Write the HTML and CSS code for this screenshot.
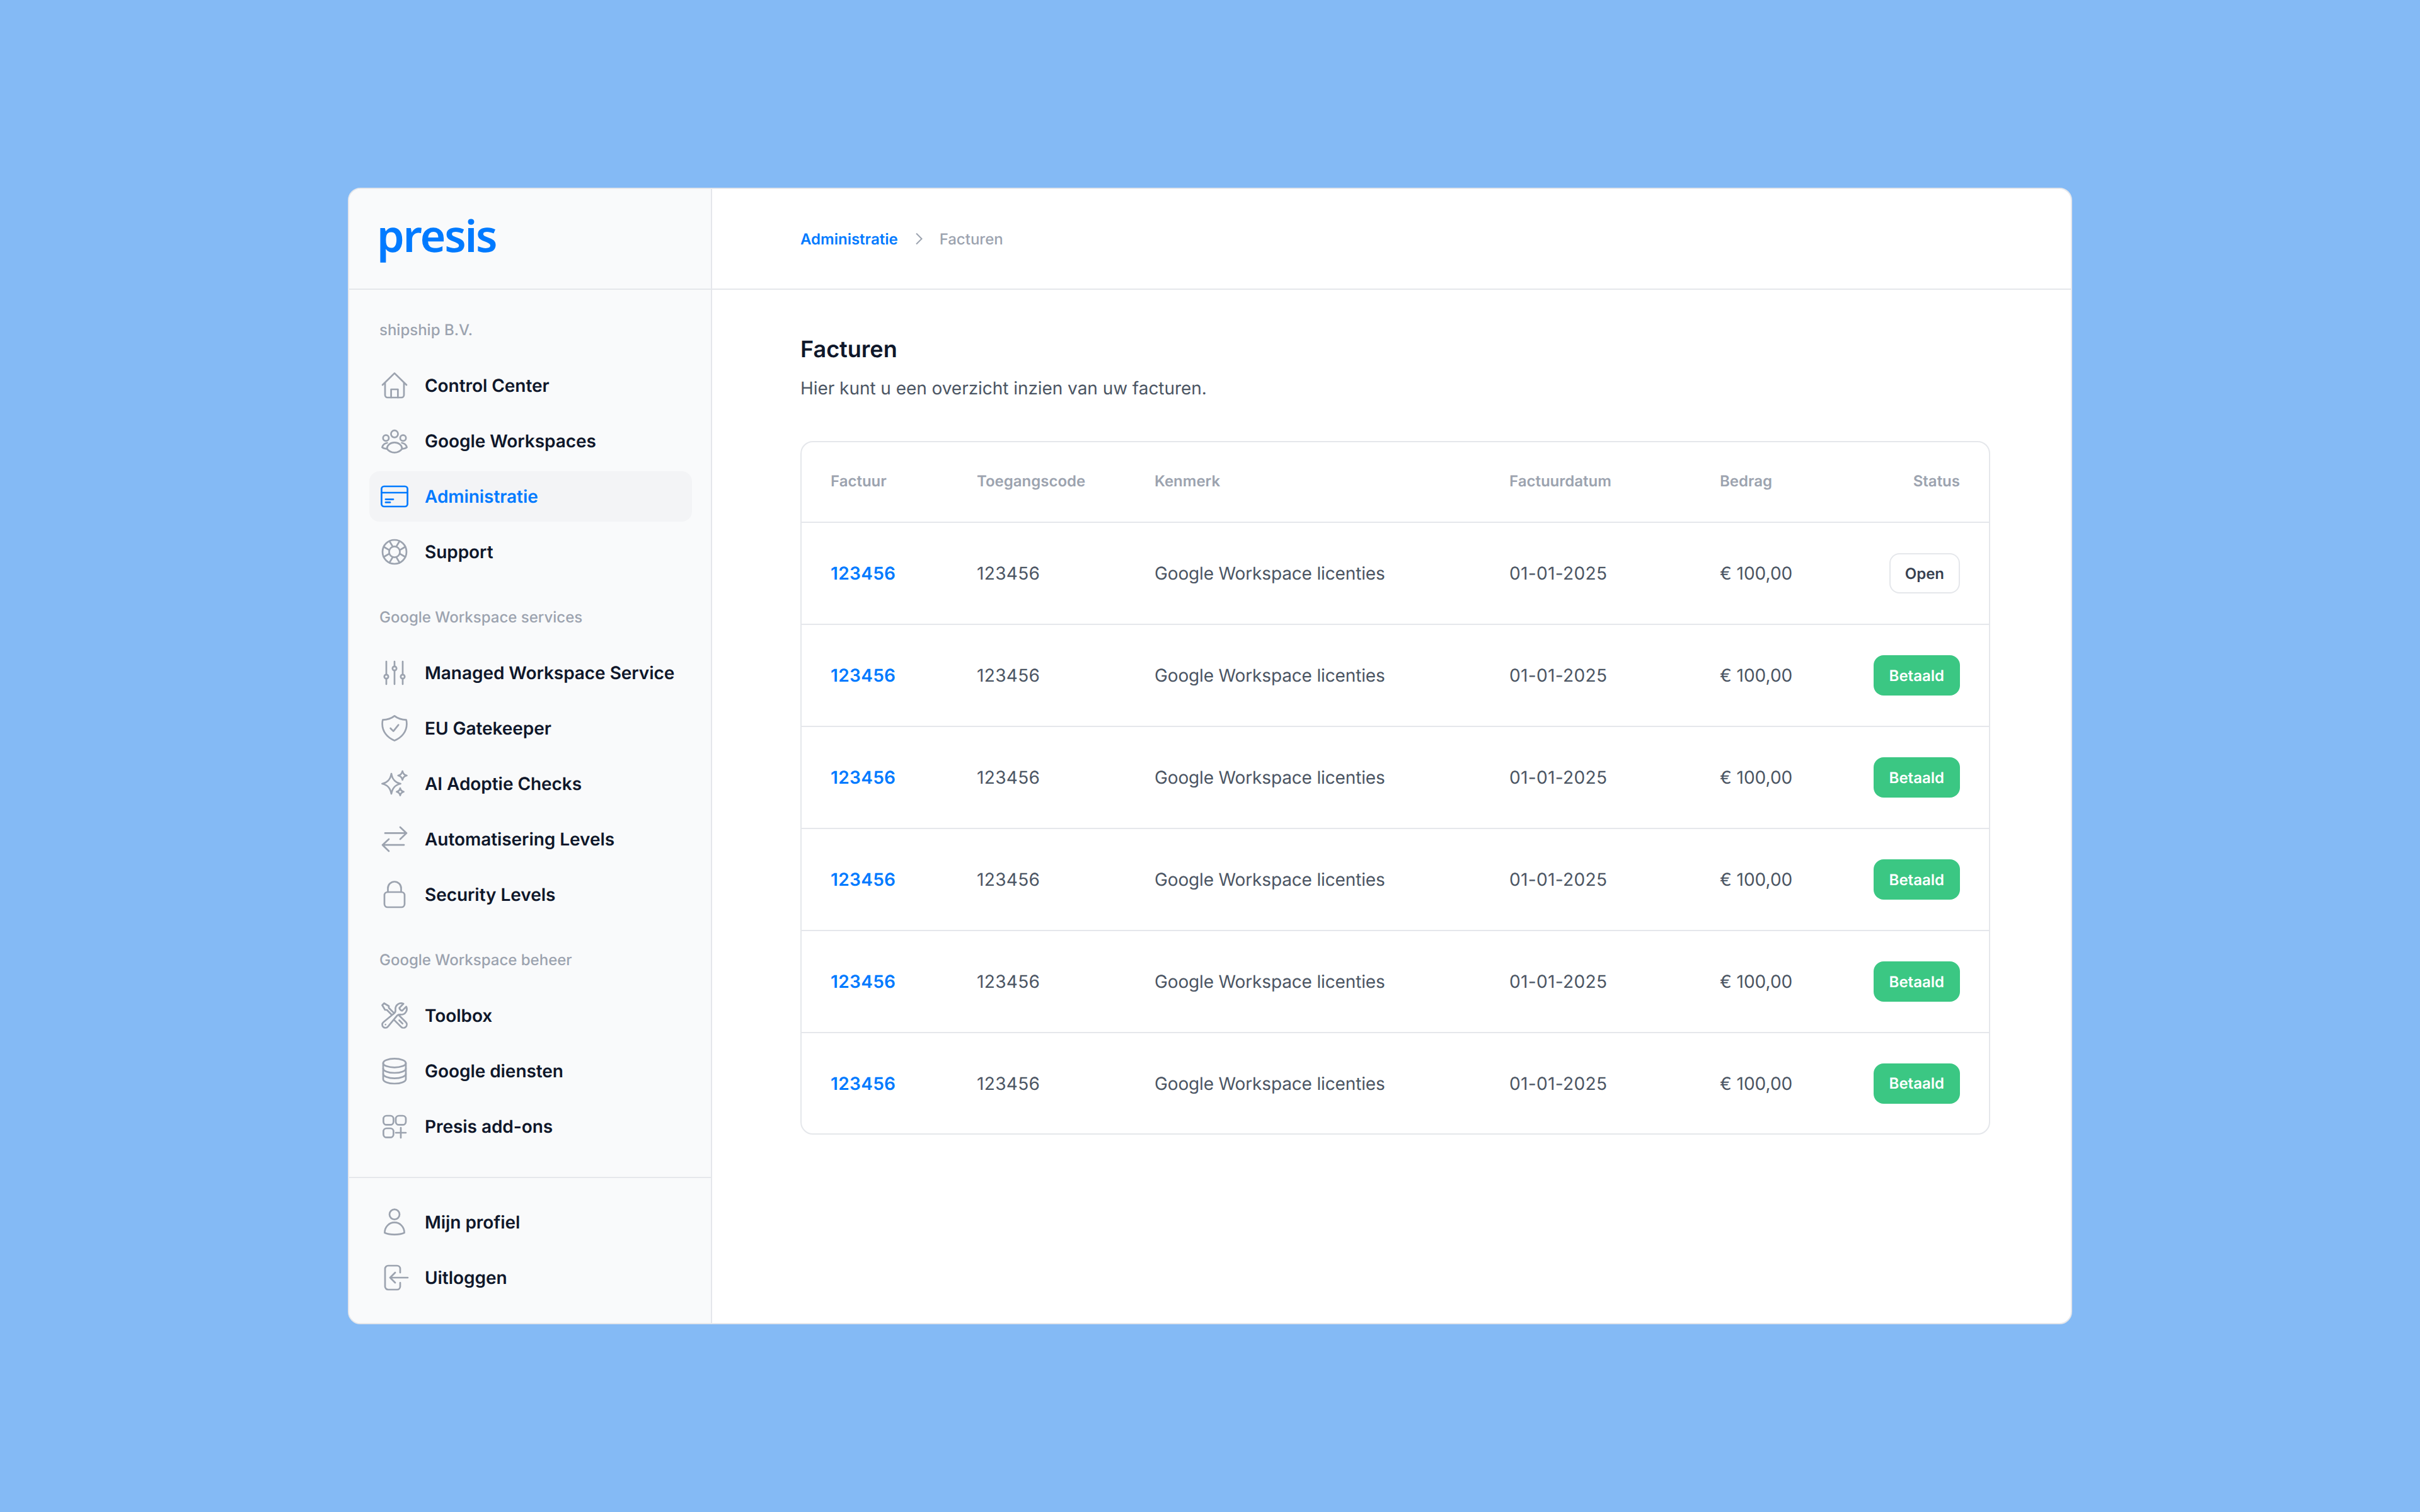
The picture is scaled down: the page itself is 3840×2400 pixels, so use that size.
FILE: index.html
```html
<!DOCTYPE html>
<html lang="nl">
<head>
    <meta charset="UTF-8">
    <meta name="viewport" content="width=device-width, initial-scale=1.0">
    <title>Facturen - Presis</title>
    <link rel="stylesheet" href="styles.css">
</head>
<body>

    <div class="window">
        <aside class="sidebar">
            <div class="logo-bar"><span class="logo">presis</span></div>

            <nav class="nav">
                <section class="nav-section">
                    <h2 class="nav-label">shipship B.V.</h2>
                    <a class="nav-item">
                        <svg class="icon" viewBox="0 0 24 24"><path d="M2.500 11.500 12 2.200l9.500 9.300"/><path d="M4.500 9.800v9.700a2 2 0 0 0 2 2h11a2 2 0 0 0 2-2V9.800"/><path d="M9.300 21.500V15h5.400v6.500"/></svg>
                        <span>Control Center</span>
                    </a>
                    <a class="nav-item">
                        <svg class="icon" viewBox="0 0 24 24"><circle cx="12" cy="6.400" r="2.800"/><circle cx="5.200" cy="9.600" r="2.300"/><circle cx="18.800" cy="9.600" r="2.300"/><path d="M6 18.200c0-2.900 2.700-5 6-5s6 2.100 6 5c-1.400 1.800-3.600 3-6 3s-4.600-1.200-6-3Z"/><path d="M6.200 13.500c-2 .3-3.500 1.600-4 3.500.9.800 2.200 1.200 3.800 1.200"/><path d="M17.800 13.500c2 .3 3.500 1.600 4 3.500-.9.800-2.200 1.200-3.800 1.200"/></svg>
                        <span>Google Workspaces</span>
                    </a>
                    <a class="nav-item active">
                        <svg class="icon" viewBox="0 0 24 24"><rect x="1.700" y="4" width="20.600" height="16" rx="2"/><path d="M1.700 9h20.600"/><path d="M5 14.300h6"/><path d="M5 16.700h3.500"/></svg>
                        <span>Administratie</span>
                    </a>
                    <a class="nav-item">
                        <svg class="icon" viewBox="0 0 24 24"><circle cx="12" cy="12" r="9.500"/><circle cx="12" cy="12" r="4.300"/><path d="m8 3.500 2.600 4.300M16 3.500l-2.600 4.300M3.500 8l4.300 2.600M20.500 8l-4.300 2.600M3.500 16l4.300-2.600M20.500 16l-4.300-2.600M8 20.500l2.600-4.300M16 20.500l-2.600-4.300"/></svg>
                        <span>Support</span>
                    </a>
                </section>

                <section class="nav-section">
                    <h2 class="nav-label">Google Workspace services</h2>
                    <a class="nav-item">
                        <svg class="icon" viewBox="0 0 24 24"><path d="M5.500 3v10.400M5.500 16.600V21M12 3v3.900M12 10.100V21M18.500 3v10.400M18.500 16.600V21"/><circle cx="5.500" cy="15" r="1.600"/><circle cx="12" cy="8.500" r="1.600"/><circle cx="18.500" cy="15" r="1.600"/></svg>
                        <span>Managed Workspace Service</span>
                    </a>
                    <a class="nav-item">
                        <svg class="icon" viewBox="0 0 24 24"><path d="M12 2.200c2.500 2 5.700 3 9.300 3.100.3 1 .4 2.100.4 3.200 0 6-3.900 11-9.700 13.200C6.200 19.500 2.300 14.500 2.300 8.500c0-1.100.1-2.200.4-3.200C6.300 5.200 9.500 4.200 12 2.200Z"/><path d="m8.800 12 2.300 2.300 4-5"/></svg>
                        <span>EU Gatekeeper</span>
                    </a>
                    <a class="nav-item">
                        <svg class="icon" viewBox="0 0 24 24"><path d="M9.500 4c.8 4.700 2.900 7 7.300 8-4.400 1-6.500 3.300-7.300 8-.8-4.700-2.900-7-7.300-8 4.400-1 6.500-3.300 7.300-8Z"/><path d="M18.300 2c.4 2 1.300 3 3.400 3.500-2.100.5-3 1.500-3.400 3.500-.4-2-1.300-3-3.400-3.500 2.100-.5 3-1.500 3.400-3.500Z"/><path d="M16.500 15.500c.3 1.700 1.100 2.500 2.800 2.900-1.700.4-2.500 1.200-2.800 2.900-.3-1.700-1.100-2.500-2.800-2.900 1.700-.4 2.500-1.200 2.800-2.900Z"/></svg>
                        <span>AI Adoptie Checks</span>
                    </a>
                    <a class="nav-item">
                        <svg class="icon" viewBox="0 0 24 24"><path d="M4.500 7.200h17M16.500 2.500l5 4.700-5 4.800"/><path d="M19.500 16.600h-17M7.500 12l-5 4.600 5 4.900"/></svg>
                        <span>Automatisering Levels</span>
                    </a>
                    <a class="nav-item">
                        <svg class="icon" viewBox="0 0 24 24"><rect x="4" y="10" width="16" height="12" rx="2.500"/><path d="M6.750 10V7a5.250 5.250 0 0 1 10.500 0v3"/></svg>
                        <span>Security Levels</span>
                    </a>
                </section>

                <section class="nav-section">
                    <h2 class="nav-label">Google Workspace beheer</h2>
                    <a class="nav-item">
                        <svg class="icon" viewBox="0 0 24 24"><path d="M11.420 15.170 17.250 21A2.652 2.652 0 0 0 21 17.250l-5.877-5.877M11.420 15.170l2.496-3.030c.317-.384.74-.626 1.208-.766M11.420 15.170l-4.655 5.653a2.548 2.548 0 1 1-3.586-3.586l6.837-5.630m5.108-.233c.55-.164 1.163-.188 1.743-.14a4.500 4.500 0 0 0 4.486-6.336l-3.276 3.277a3.004 3.004 0 0 1-2.250-2.250l3.276-3.276a4.500 4.500 0 0 0-6.336 4.486c.091 1.076-.071 2.264-.904 2.950l-.102.085m-1.745 1.437L5.909 7.500H4.500L2.250 3.750l1.500-1.500L7.500 4.500v1.409l4.260 4.260m-1.745 1.437 1.745-1.437m6.615 8.206L15.750 15.750M4.867 19.125h.008v.008h-.008v-.008Z"/></svg>
                        <span>Toolbox</span>
                    </a>
                    <a class="nav-item">
                        <svg class="icon" viewBox="0 0 24 24"><ellipse cx="12" cy="5.700" rx="9" ry="3.500"/><path d="M3 5.700v12.800c0 1.900 4 3.500 9 3.500s9-1.600 9-3.500V5.700"/><path d="M3 10c0 1.900 4 3.500 9 3.500s9-1.600 9-3.500"/><path d="M3 14.300c0 1.900 4 3.500 9 3.500s9-1.600 9-3.500"/></svg>
                        <span>Google diensten</span>
                    </a>
                    <a class="nav-item">
                        <svg class="icon" viewBox="0 0 24 24"><rect x="3.200" y="3.500" width="8" height="7.200" rx="2.500"/><rect x="13" y="3.500" width="8" height="7.200" rx="2.500"/><rect x="3.200" y="13.500" width="8" height="7.200" rx="2.500"/><path d="M17 13v8M13 17h8"/></svg>
                        <span>Presis add-ons</span>
                    </a>
                </section>
            </nav>

            <div class="nav-footer">
                <a class="nav-item">
                    <svg class="icon" viewBox="0 0 24 24"><circle cx="12" cy="5.800" r="4"/><path d="M4.200 20.400c0-4.700 3.500-8.200 7.800-8.200s7.800 3.500 7.800 8.200c-1.800.9-4.800 1.400-7.800 1.400s-6-.5-7.800-1.400Z"/></svg>
                    <span>Mijn profiel</span>
                </a>
                <a class="nav-item">
                    <svg class="icon" viewBox="0 0 24 24"><path d="M16.500 8V5A2.500 2.500 0 0 0 14 2.500H7A2.500 2.500 0 0 0 4.500 5v14A2.500 2.500 0 0 0 7 21.500h7a2.500 2.500 0 0 0 2.500-2.500v-3"/><path d="M22.500 12h-14M12.500 8l-4 4 4 4"/></svg>
                    <span>Uitloggen</span>
                </a>
            </div>
        </aside>

        <main class="main">
            <div class="breadcrumb-bar">
                <a class="crumb-link">Administratie</a>
                <svg class="crumb-sep" viewBox="0 0 24 24"><path d="m8 3.500 8.500 8.500L8 20.500"/></svg>
                <span class="crumb-current">Facturen</span>
            </div>

            <div class="content">
                <h1>Facturen</h1>
                <p class="intro">Hier kunt u een overzicht inzien van uw facturen.</p>

                <div class="table-card">
                    <table>
                        <thead>
                            <tr>
                                <th class="col-invoice">Factuur</th>
                                <th class="col-code">Toegangscode</th>
                                <th class="col-ref">Kenmerk</th>
                                <th class="col-date">Factuurdatum</th>
                                <th class="col-amount">Bedrag</th>
                                <th class="col-status">Status</th>
                            </tr>
                        </thead>
                        <tbody>
                            <tr>
                                <td><a class="invoice-link">123456</a></td>
                                <td class="num">123456</td>
                                <td class="ref">Google Workspace licenties</td>
                                <td class="num">01-01-2025</td>
                                <td>€ 100,00</td>
                                <td class="col-status"><span class="badge badge-open">Open</span></td>
                            </tr>
                            <tr>
                                <td><a class="invoice-link">123456</a></td>
                                <td class="num">123456</td>
                                <td class="ref">Google Workspace licenties</td>
                                <td class="num">01-01-2025</td>
                                <td>€ 100,00</td>
                                <td class="col-status"><span class="badge badge-paid">Betaald</span></td>
                            </tr>
                            <tr>
                                <td><a class="invoice-link">123456</a></td>
                                <td class="num">123456</td>
                                <td class="ref">Google Workspace licenties</td>
                                <td class="num">01-01-2025</td>
                                <td>€ 100,00</td>
                                <td class="col-status"><span class="badge badge-paid">Betaald</span></td>
                            </tr>
                            <tr>
                                <td><a class="invoice-link">123456</a></td>
                                <td class="num">123456</td>
                                <td class="ref">Google Workspace licenties</td>
                                <td class="num">01-01-2025</td>
                                <td>€ 100,00</td>
                                <td class="col-status"><span class="badge badge-paid">Betaald</span></td>
                            </tr>
                            <tr>
                                <td><a class="invoice-link">123456</a></td>
                                <td class="num">123456</td>
                                <td class="ref">Google Workspace licenties</td>
                                <td class="num">01-01-2025</td>
                                <td>€ 100,00</td>
                                <td class="col-status"><span class="badge badge-paid">Betaald</span></td>
                            </tr>
                            <tr>
                                <td><a class="invoice-link">123456</a></td>
                                <td class="num">123456</td>
                                <td class="ref">Google Workspace licenties</td>
                                <td class="num">01-01-2025</td>
                                <td>€ 100,00</td>
                                <td class="col-status"><span class="badge badge-paid">Betaald</span></td>
                            </tr>
                        </tbody>
                    </table>
                </div>
            </div>
        </main>
    </div>

</body>
</html>
```

FILE: styles.css
```css
* {
    box-sizing: border-box;
}
body {
    margin: 0;
    height: 100vh;
    display: flex;
    align-items: center;
    justify-content: center;
    background-color: #84baf5;
    font-family: Inter, "Liberation Sans", sans-serif;
    text-rendering: geometricPrecision;
    color: #0f172a;
}
.window {
    width: 2736px;
    height: 1804px;
    display: flex;
    background-color: #fff;
    border: 2px solid #e5e7eb;
    border-radius: 20px;
    overflow: hidden;
}

/* sidebar */
.sidebar {
    width: 576px;
    flex-shrink: 0;
    display: flex;
    flex-direction: column;
    background-color: #f9fafb;
    border-right: 2px solid #e5e7eb;
}
.logo-bar {
    height: 160px;
    flex-shrink: 0;
    padding: 0 0 13px 44px;
    display: flex;
    align-items: center;
    border-bottom: 2px solid #e5e7eb;
}
.logo {
    font-family: "Noto Sans", sans-serif;
    font-size: 70px;
    font-weight: 600;
    letter-spacing: -2.2px;
    line-height: 1;
    color: #007aff;
}
.nav {
    flex: 1;
    padding: 48px 30px 0 32px;
    display: flex;
    flex-direction: column;
    gap: 48px;
}
.nav-section {
    display: flex;
    flex-direction: column;
    gap: 8px;
}
.nav-label {
    margin: 0 0 24px;
    padding-left: 16px;
    font-size: 24px;
    line-height: 32px;
    font-weight: 500;
    color: #9ca3af;
}
.nav-item {
    height: 80px;
    padding: 0 16px;
    display: flex;
    align-items: center;
    gap: 24px;
    border-radius: 16px;
    font-size: 28px;
    font-weight: 600;
    letter-spacing: -0.05px;
    color: #0f172a;
}
.nav-item.active {
    background-color: #f3f4f6;
    color: #007aff;
}
.icon {
    width: 48px;
    height: 48px;
    flex-shrink: 0;
    fill: none;
    stroke: #9ca3af;
    stroke-width: 1.35;
    stroke-linecap: round;
    stroke-linejoin: round;
}
.nav-item.active .icon {
    stroke: #007aff;
}
.nav-footer {
    padding: 30px 30px 32px 32px;
    display: flex;
    flex-direction: column;
    gap: 8px;
    border-top: 2px solid #e5e7eb;
}

/* main */
.main {
    flex: 1;
    min-width: 0;
}
.breadcrumb-bar {
    height: 160px;
    padding-left: 140px;
    display: flex;
    align-items: center;
    gap: 21px;
    border-bottom: 2px solid #e5e7eb;
    font-size: 24px;
}
.crumb-link {
    font-weight: 600;
    color: #007aff;
}
.crumb-sep {
    width: 24px;
    height: 24px;
    fill: none;
    stroke: #9ca3af;
    stroke-width: 2;
}
.crumb-current {
    font-weight: 500;
    color: #9ca3af;
}
.content {
    padding: 72px 128px 0 140px;
}
h1 {
    margin: 0;
    font-size: 36px;
    line-height: 44px;
    font-weight: 600;
    color: #0f172a;
}
.intro {
    margin: 20px 0 0;
    font-size: 28px;
    line-height: 40px;
    letter-spacing: -0.05px;
    color: #4b5563;
}

/* table */
.table-card {
    margin-top: 64px;
    border: 2px solid #e5e7eb;
    border-radius: 20px;
    overflow: hidden;
}
table {
    width: 100%;
    table-layout: fixed;
    border-collapse: collapse;
}
th {
    height: 127px;
    padding: 0 0 3px;
    text-align: left;
    font-size: 24px;
    font-weight: 600;
    color: #9ca3af;
}
td {
    height: 162px;
    padding: 0;
    border-top: 2px solid #e5e7eb;
    font-size: 28px;
    color: #4b5563;
}
tbody tr:last-child td {
    height: 160px;
}
.num {
    letter-spacing: 0.35px;
}
.ref {
    letter-spacing: -0.15px;
}
th.col-invoice {
    width: 278px;
    padding-left: 46px;
}
tbody td:first-child {
    padding-left: 46px;
}
.col-code {
    width: 282px;
}
.col-ref {
    width: 563px;
}
.col-date {
    width: 334px;
}
.col-amount {
    width: 240px;
}
th.col-status,
td.col-status {
    padding-right: 46px;
    text-align: right;
}
.invoice-link {
    font-weight: 600;
    letter-spacing: 0.35px;
    color: #007aff;
}
.badge {
    display: inline-flex;
    align-items: center;
    height: 64px;
    border-radius: 16px;
    font-size: 24px;
    font-weight: 600;
    vertical-align: middle;
}
.badge-open {
    padding: 0 23px;
    border: 2px solid #e5e7eb;
    color: #374151;
}
.badge-paid {
    padding: 0 25px;
    background-color: #3bc783;
    color: #fff;
}
```
